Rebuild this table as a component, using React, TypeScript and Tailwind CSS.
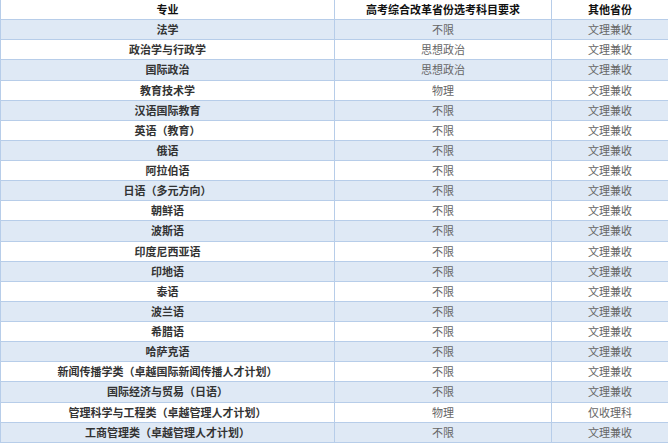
const rows: [string, string, string][] = [
  ["法学", "不限", "文理兼收"],
  ["政治学与行政学", "思想政治", "文理兼收"],
  ["国际政治", "思想政治", "文理兼收"],
  ["教育技术学", "物理", "文理兼收"],
  ["汉语国际教育", "不限", "文理兼收"],
  ["英语（教育）", "不限", "文理兼收"],
  ["俄语", "不限", "文理兼收"],
  ["阿拉伯语", "不限", "文理兼收"],
  ["日语（多元方向）", "不限", "文理兼收"],
  ["朝鲜语", "不限", "文理兼收"],
  ["波斯语", "不限", "文理兼收"],
  ["印度尼西亚语", "不限", "文理兼收"],
  ["印地语", "不限", "文理兼收"],
  ["泰语", "不限", "文理兼收"],
  ["波兰语", "不限", "文理兼收"],
  ["希腊语", "不限", "文理兼收"],
  ["哈萨克语", "不限", "文理兼收"],
  ["新闻传播学类（卓越国际新闻传播人才计划）", "不限", "文理兼收"],
  ["国际经济与贸易（日语）", "不限", "文理兼收"],
  ["管理科学与工程类（卓越管理人才计划）", "物理", "仅收理科"],
  ["工商管理类（卓越管理人才计划）", "不限", "文理兼收"],
];

export default function App() {
  return (
    <div className="w-[668px] h-[443px] overflow-hidden bg-white font-['Noto_Sans_CJK_SC',sans-serif] text-[11px] leading-none">
      {/* Header */}
      <div className="grid grid-cols-[334px_217px_1fr] h-[20.14px] border-b border-[#b7cde9] bg-white font-bold text-[#111]">
        <div className="flex items-center justify-center border-l border-[#b7cde9]">专业</div>
        <div className="flex items-center justify-center border-l border-[#b7cde9]">高考综合改革省份选考科目要求</div>
        <div className="flex items-center justify-center border-l border-[#b7cde9]">其他省份</div>
      </div>

      {rows.map(([major, subject, other], i) => (
        <div
          key={major}
          className={`grid grid-cols-[334px_217px_1fr] h-[20.14px] border-b border-[#b7cde9] ${
            i % 2 === 0 ? "bg-[#dfe9f5]" : "bg-white"
          }`}
        >
          <div className="flex items-center justify-center border-l border-[#b7cde9] font-semibold text-[#333]">
            {major}
          </div>
          <div className="flex items-center justify-center border-l border-[#b7cde9] text-[#666]">{subject}</div>
          <div className="flex items-center justify-center border-l border-[#b7cde9] text-[#666]">{other}</div>
        </div>
      ))}
    </div>
  );
}
